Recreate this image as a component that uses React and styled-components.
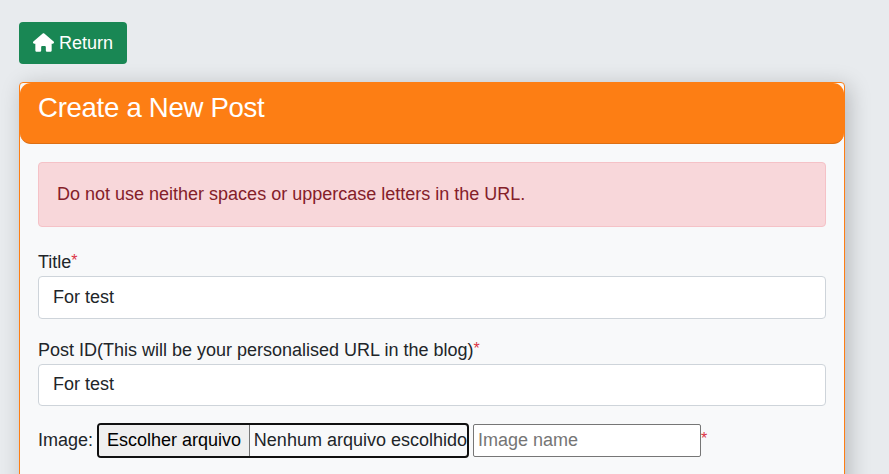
import React from 'react';
import styled, { createGlobalStyle } from 'styled-components';
import { FaHouse } from 'react-icons/fa6';

const GlobalStyle = createGlobalStyle`
  *, *::before, *::after { box-sizing: border-box; }
  html, body { height: 100%; overflow: hidden; }
  body {
    margin: 0;
    background: #e8ebee;
    color: #212529;
    font: 18px/27px "Liberation Sans", Arial, sans-serif;
  }
`;

const Page = styled.main`
  height: 474px;
  overflow: hidden;
  padding: 22px 44px 0 19px;
`;

const ReturnButton = styled.button`
  display: flex;
  align-items: center;
  gap: 5px;
  width: 108px;
  height: 42px;
  padding: 0 0 0 14px;
  border: 0;
  border-radius: 4px;
  background: #198754;
  color: #fff;
  font: inherit;
  white-space: nowrap;

  svg { width: 21px; height: 19px; flex: none; margin-bottom: 2px; }
`;

const Card = styled.section`
  height: 600px;
  margin-top: 18px;
  border: 1px solid #fd7e14;
  border-radius: 4px;
  background: #f8f9fa;
  box-shadow: 4px 4px 22px rgba(0, 0, 0, 0.22);
`;

const CardHeader = styled.header`
  height: 61px;
  padding: 8px 18px;
  border-bottom: 1px solid #dd6f13;
  border-radius: 11px;
  background: #fd7e14;
`;

const Heading = styled.h1`
  margin: 0;
  color: #fff;
  font-size: 27.6px;
  font-weight: 400;
  letter-spacing: -0.3px;
  line-height: 33px;
`;

const CardBody = styled.form`
  padding: 18px;
`;

const Alert = styled.div`
  height: 65px;
  padding: 18px;
  margin-bottom: 22px;
  border: 1px solid #f5c2c7;
  border-radius: 4px;
  background: #f8d7da;
  color: #842029;
`;

const Field = styled.label`
  display: block;
  margin-bottom: ${(p) => p.$gap}px;
`;

const Label = styled.span`
  display: block;
  height: 27px;
`;

const Required = styled.sup`
  color: #dc3545;
  font-size: 16px;
  line-height: 0;
  vertical-align: 2px;
`;

const RowRequired = styled(Required)`
  margin-bottom: 4px;
`;

const TextInput = styled.input`
  display: block;
  width: 100%;
  height: ${(p) => p.$height}px;
  padding: 0 14px ${(p) => p.$lift || 0}px;
  border: 1px solid #ced4da;
  border-radius: 4px;
  background: #fff;
  color: #212529;
  font: inherit;
`;

const ImageRow = styled.div`
  display: flex;
  align-items: center;
  height: 35px;
`;

const ImageLabel = styled.span`
  width: 59px;
`;

const FilePicker = styled.div`
  display: flex;
  width: 372px;
  height: 35px;
  margin-right: 4px;
  border: 2px solid #101010;
  border-radius: 4px;
  line-height: 31px;
  white-space: nowrap;
  overflow: hidden;
`;

const FileButton = styled.button`
  width: 151px;
  padding: 0 0 0 8px;
  border: 0;
  border-right: 1px solid #767676;
  background: #efefef;
  color: #000;
  font: inherit;
  text-align: left;
`;

const FileName = styled.span`
  padding-left: 4px;
`;

const ImageName = styled.input`
  width: 228px;
  height: 33px;
  padding: 0 4px;
  border: 1px solid #767676;
  border-radius: 2px;
  background: #fff;
  font: inherit;

  &::placeholder { color: #757575; opacity: 1; }
`;

export default function App() {
  return (
    <>
      <GlobalStyle />
      <Page>
        <ReturnButton><FaHouse />Return</ReturnButton>
        <Card>
          <CardHeader><Heading>Create a New Post</Heading></CardHeader>
          <CardBody>
            <Alert>Do not use neither spaces or uppercase letters in the URL.</Alert>
            <Field $gap={18}>
              <Label>Title<Required>*</Required></Label>
              <TextInput $height={43} defaultValue="For test" />
            </Field>
            <Field $gap={17}>
              <Label>Post ID(This will be your personalised URL in the blog)<Required>*</Required></Label>
              <TextInput $height={42} $lift={2} defaultValue="For test" />
            </Field>
            <ImageRow>
              <ImageLabel>Image:</ImageLabel>
              <FilePicker>
                <FileButton type="button">Escolher arquivo</FileButton>
                <FileName>Nenhum arquivo escolhido</FileName>
              </FilePicker>
              <ImageName placeholder="Image name" />
              <RowRequired>*</RowRequired>
            </ImageRow>
          </CardBody>
        </Card>
      </Page>
    </>
  );
}
